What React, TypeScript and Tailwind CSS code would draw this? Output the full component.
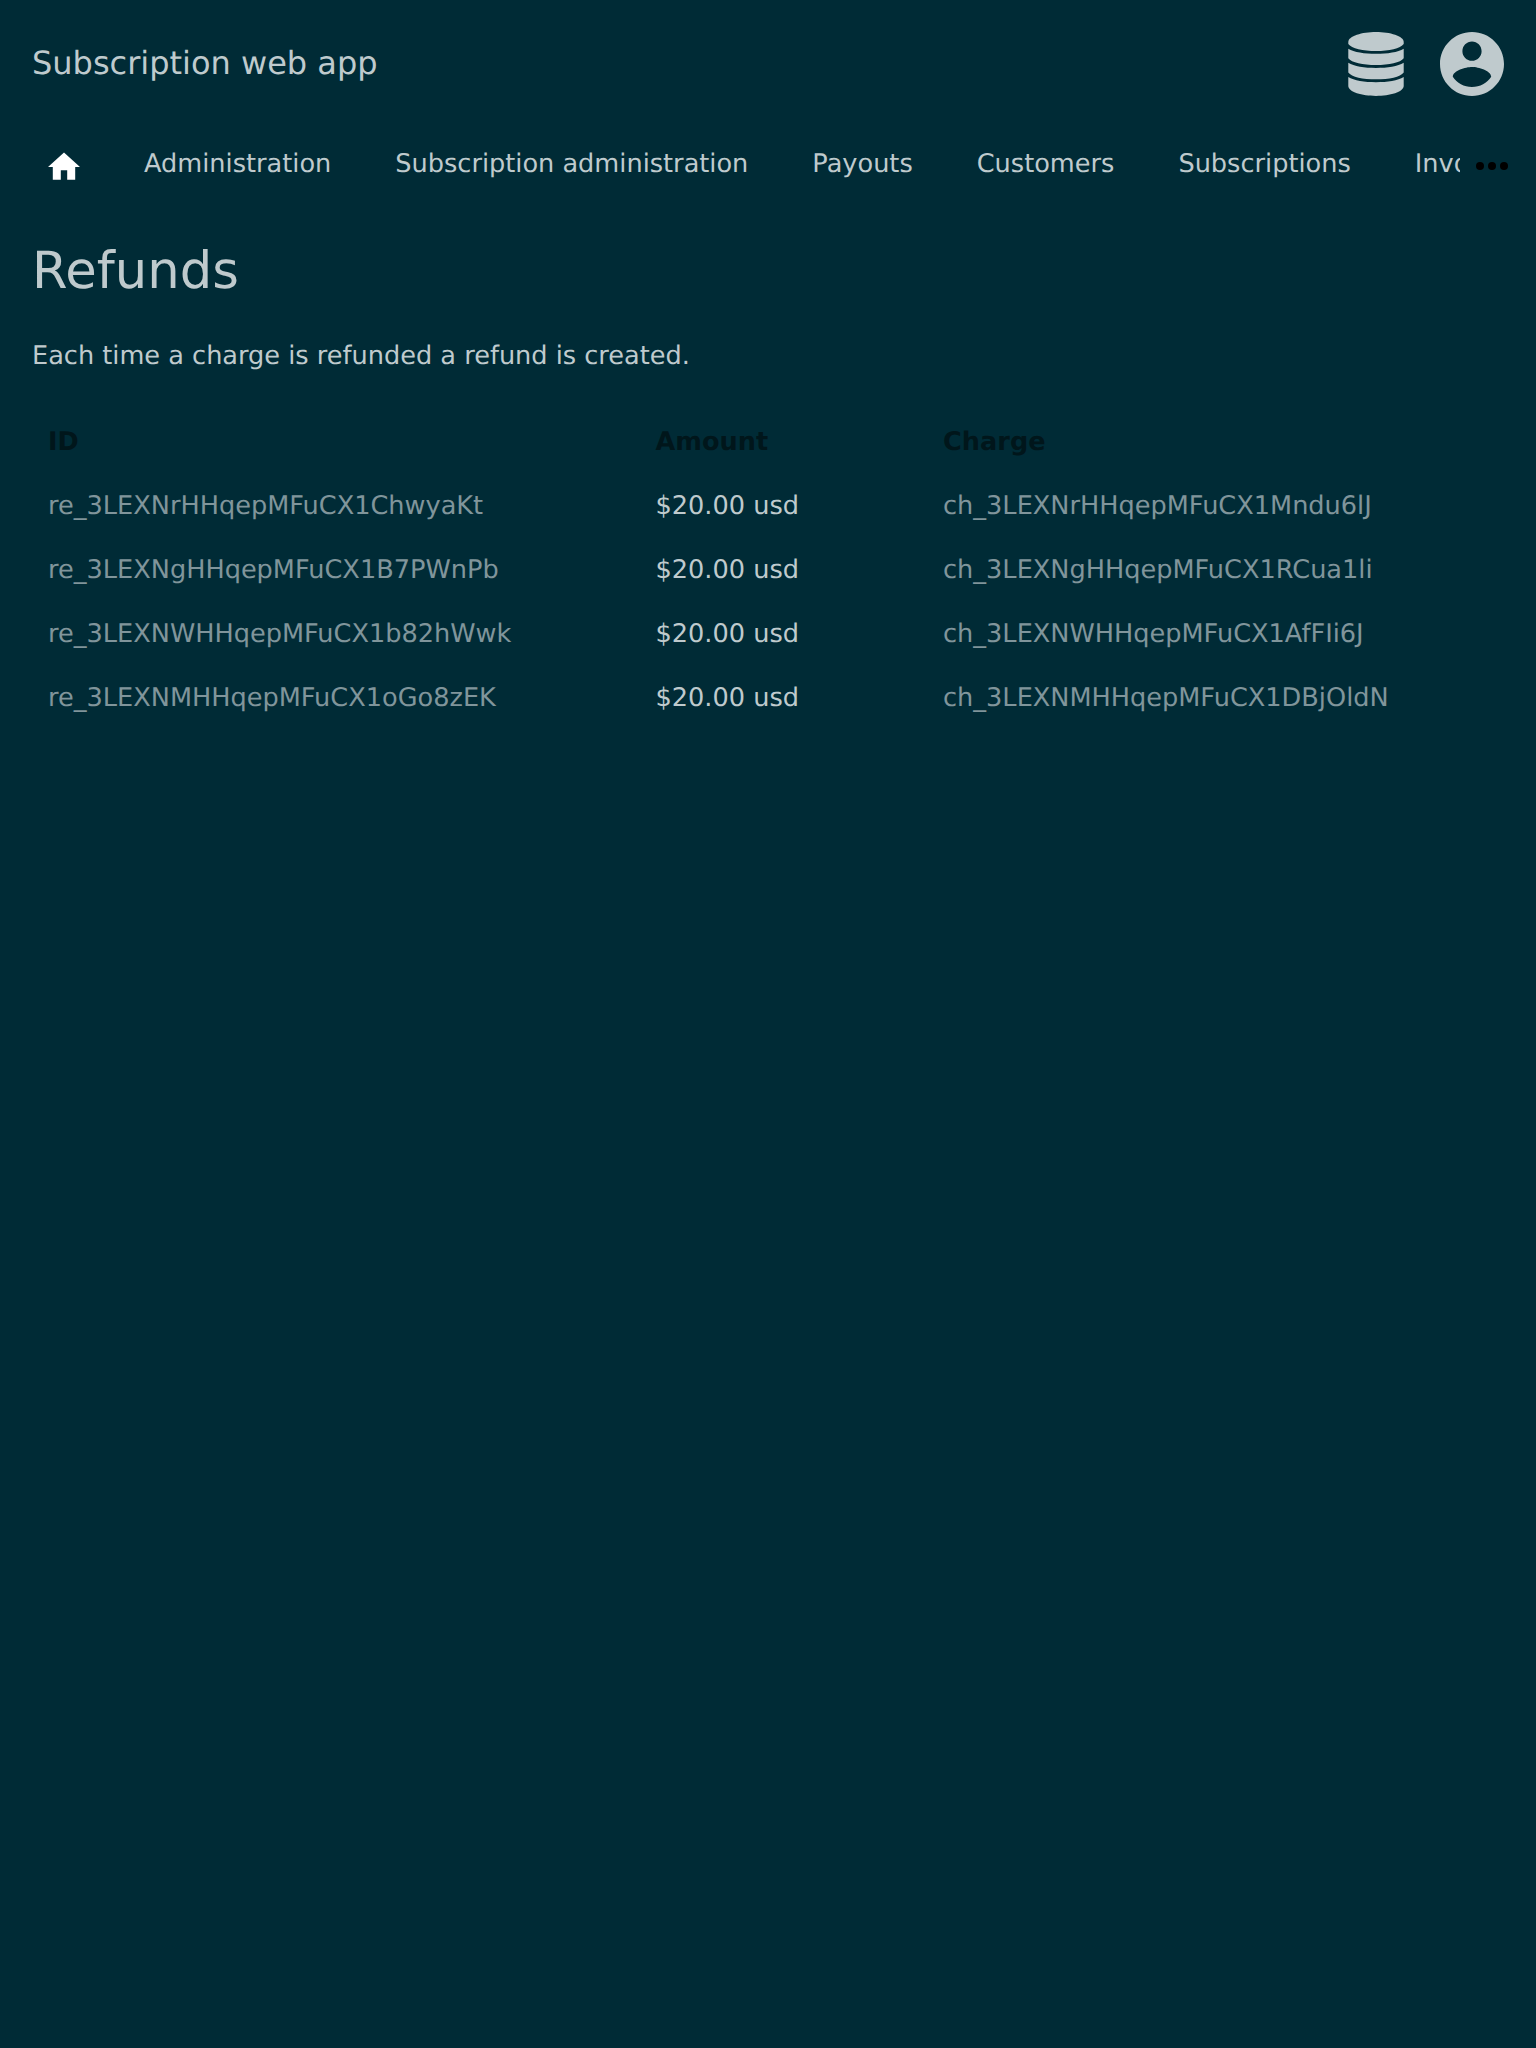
const navItems = [
  'Administration',
  'Subscription administration',
  'Payouts',
  'Customers',
  'Subscriptions',
  'Invoices',
];

const refunds = [
  { id: 're_3LEXNrHHqepMFuCX1ChwyaKt', amount: '$20.00 usd', charge: 'ch_3LEXNrHHqepMFuCX1Mndu6lJ' },
  { id: 're_3LEXNgHHqepMFuCX1B7PWnPb', amount: '$20.00 usd', charge: 'ch_3LEXNgHHqepMFuCX1RCua1li' },
  { id: 're_3LEXNWHHqepMFuCX1b82hWwk', amount: '$20.00 usd', charge: 'ch_3LEXNWHHqepMFuCX1AfFIi6J' },
  { id: 're_3LEXNMHHqepMFuCX1oGo8zEK', amount: '$20.00 usd', charge: 'ch_3LEXNMHHqepMFuCX1DBjOldN' },
];

function DatabaseIcon() {
  return (
    <svg viewBox="0 0 56 64" className="h-16 w-14" fill="currentColor">
      <path d="M28 0C42 0 55.700 4 55.700 10v2C52.500 16.500 41 19 28 19S3.500 16.500.3 12v-2C.3 4 14 0 28 0z" />
      <path d="M.3 16.700C6 20.200 16.500 21.800 28 21.800s22-1.600 27.700-5.100v9.500C52.500 30.600 41 33 28 33S3.500 30.600.3 26.200z" />
      <path d="M.3 30.800C6 34.300 16.500 36 28 36s22-1.700 27.700-5.200v9.600C52.500 44.900 41 47.300 28 47.300S3.500 44.900.3 40.400z" />
      <path d="M.3 45.100C6 48.600 16.500 50.300 28 50.300s22-1.700 27.700-5.200v9C55.700 60 42 64 28 64S.3 60 .3 54.100z" />
    </svg>
  );
}

function AccountIcon() {
  return (
    <svg viewBox="2 2 20 20" className="size-16" fill="currentColor">
      <path d="M12 2C6.480 2 2 6.480 2 12s4.480 10 10 10 10-4.480 10-10S17.520 2 12 2zm0 3c1.660 0 3 1.340 3 3s-1.340 3-3 3-3-1.340-3-3 1.340-3 3-3zm0 14.200c-2.500 0-4.710-1.280-6-3.220.03-1.990 4-3.080 6-3.080 1.990 0 5.970 1.090 6 3.080-1.290 1.940-3.500 3.220-6 3.220z" />
    </svg>
  );
}

export default function App() {
  return (
    <div className="min-h-[2048px] bg-[#002b36] font-['DejaVu_Sans',sans-serif] text-[25.6px] leading-8 text-[#bfcacd] [text-rendering:geometricPrecision]">
      <header className="flex h-32 items-center justify-between px-8">
        <div className="pb-0.5 text-[32px] leading-10">Subscription web app</div>
        <div className="flex gap-9">
          <DatabaseIcon />
          <AccountIcon />
        </div>
      </header>
      <nav className="flex h-[73px] items-center">
        <div className="flex w-[1460px] shrink-0 items-center overflow-hidden pt-px pl-12 whitespace-nowrap">
          <a className="mr-16 shrink-0 pt-1 text-white">
            <svg viewBox="2 2 20 20" className="size-8" fill="currentColor">
              <path d="M10 20v-6h4v6h5v-8h3L12 3 2 12h3v8z" />
            </svg>
          </a>
          {navItems.map((item) => (
            <a key={item} className="mr-16 shrink-0 pb-0.5">{item}</a>
          ))}
        </div>
        <svg viewBox="0 0 32 8" className="mt-[3px] ml-4 h-2 w-8 shrink-0" fill="#000">
          <circle cx="4" cy="4" r="4" />
          <circle cx="16" cy="4" r="4" />
          <circle cx="28" cy="4" r="4" />
        </svg>
      </nav>
      <main className="px-8">
        <h1 className="mt-9 text-[51.2px] leading-[68px]">Refunds</h1>
        <p className="mt-[35px]">Each time a charge is refunded a refund is created.</p>
        <table className="mt-[38px] w-full table-fixed text-left">
          <colgroup>
            <col className="w-[607.5px]" />
            <col className="w-[287.5px]" />
            <col />
          </colgroup>
          <thead>
            <tr className="h-16 text-[#00161b]">
              <th className="px-4 font-bold">ID</th>
              <th className="px-4 font-bold">Amount</th>
              <th className="px-4 font-bold">Charge</th>
            </tr>
          </thead>
          <tbody>
            {refunds.map((r) => (
              <tr key={r.id} className="h-16">
                <td className="px-4 text-[#80959b]">{r.id}</td>
                <td className="px-4">{r.amount}</td>
                <td className="px-4 text-[#80959b]">{r.charge}</td>
              </tr>
            ))}
          </tbody>
        </table>
      </main>
    </div>
  );
}
